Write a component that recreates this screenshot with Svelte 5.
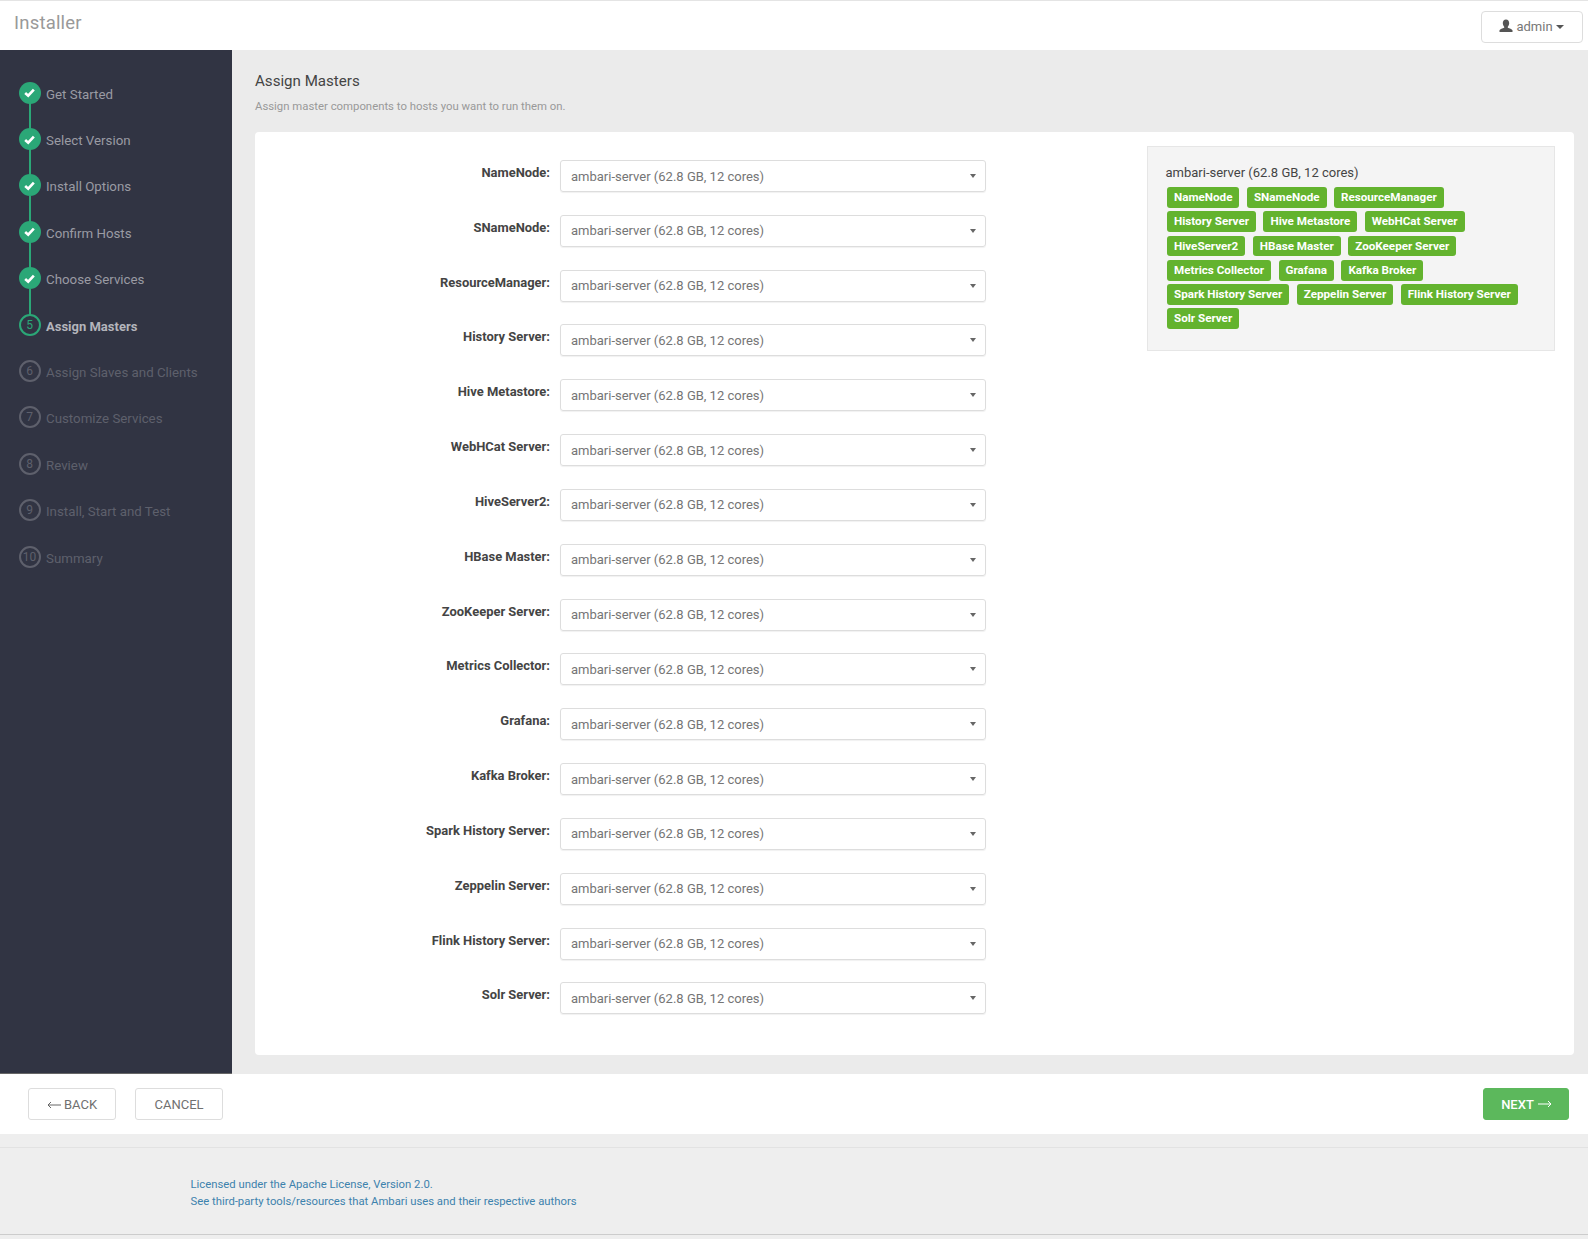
<script>
  const done = ['Get Started', 'Select Version', 'Install Options', 'Confirm Hosts', 'Choose Services'];
  const todo = ['Assign Slaves and Clients', 'Customize Services', 'Review', 'Install, Start and Test', 'Summary'];
  const comps = ['NameNode', 'SNameNode', 'ResourceManager', 'History Server', 'Hive Metastore', 'WebHCat Server', 'HiveServer2', 'HBase Master', 'ZooKeeper Server', 'Metrics Collector', 'Grafana', 'Kafka Broker', 'Spark History Server', 'Zeppelin Server', 'Flink History Server', 'Solr Server'];
  const host = 'ambari-server (62.8 GB, 12 cores)';
</script>

<div class="page">
  <header class="top">
    <span class="brand">Installer</span>
    <button class="user">
      <svg class="person" viewBox="0 0 14 14" width="14" height="14"><path d="M7 0.5c2 0 3.2 1.5 3.2 3.6 0 1.5-.6 2.8-1.4 3.6v1.1c1.6.6 4.2 1.2 4.7 2.5v1.7H.5v-1.700c.5-1.300 3.100-1.900 4.700-2.500V7.700C4.400 6.900 3.800 5.600 3.800 4.100 3.800 2 5 .5 7 .5z" fill="#555"/></svg>
      <span>admin</span><i class="caret dark"></i>
    </button>
  </header>

  <div class="main">
    <nav class="side">
      {#each done as s, i}
        <div class="step">
          <span class="dot ok">
            <svg viewBox="0 0 12 12" width="13" height="13"><path d="M2 6.500 4.800 9 10 3.300" fill="none" stroke="#fff" stroke-width="2.400"/></svg>
          </span>
          <span class="name ok-name">{s}</span>
          <span class="line"></span>
        </div>
      {/each}
      <div class="step">
        <span class="dot cur">5</span><span class="name cur-name">Assign Masters</span>
      </div>
      {#each todo as s, i}
        <div class="step">
          <span class="dot off">{i + 6}</span><span class="name off-name">{s}</span>
        </div>
      {/each}
    </nav>

    <section class="content">
      <h2>Assign Masters</h2>
      <p class="sub">Assign master components to hosts you want to run them on.</p>
      <div class="card">
        <div class="form">
          {#each comps as c}
            <div class="row">
              <span class="lab">{c}:</span>
              <div class="sel"><span>{host}</span><i class="caret small"></i></div>
            </div>
          {/each}
        </div>
        <aside class="panel">
          <div class="host">{host}</div>
          <div class="tags">
            {#each comps as c}<span class="tag">{c}</span>{/each}
          </div>
        </aside>
      </div>
    </section>
  </div>

  <div class="actions">
    <div class="left">
      <button class="btn">
        <svg viewBox="0 0 14 8" width="14" height="8"><path d="M14 4H1M4 1 1 4l3 3" fill="none" stroke="#666" stroke-width="1"/></svg>
        BACK
      </button>
      <button class="btn">CANCEL</button>
    </div>
    <button class="btn next">
      NEXT
      <svg viewBox="0 0 14 8" width="14" height="8"><path d="M0 4h13M10 1l3 3-3 3" fill="none" stroke="#fff" stroke-width="1"/></svg>
    </button>
  </div>

  <footer class="foot">
    <div>Licensed under the Apache License, Version 2.0.</div>
    <div>See third-party tools/resources that Ambari uses and their respective authors</div>
  </footer>
</div>

<style>
  :global(body) { margin: 0; font-family: Roboto, "Liberation Sans", sans-serif; background: #fff; }
  .page { width: 1588px; height: 1239px; display: flex; flex-direction: column; overflow: hidden; background: #eee; }
  .top { height: 50px; box-sizing: border-box; border-top: 1px solid #e4e4e4; background: #fff; display: flex; align-items: center; justify-content: space-between; padding: 0 5px 0 14px; flex: none; }
  .brand { font-size: 18.500px; color: #999; letter-spacing: 0.2px; margin-top: -5px; }
  .user { width: 102px; height: 32px; margin-top: 2px; box-sizing: border-box; border: 1px solid #ddd; border-radius: 4px; background: #fff; color: #777; font: 13px Roboto, sans-serif; display: flex; align-items: center; justify-content: center; gap: 3px; padding: 0 1px 0 0; }
  .person { margin-top: -2px; }
  .caret { display: inline-block; width: 0; height: 0; border-left: 4px solid transparent; border-right: 4px solid transparent; border-top: 4px solid #666; }
  .caret.small { border-left-width: 3.500px; border-right-width: 3.500px; }
  .caret.dark { border-top-color: #555; margin-left: 0; }

  .main { height: 1024px; flex: none; display: flex; background: #ebebeb; }
  .side { width: 232px; flex: none; background: #313443; border-bottom: 1px solid #666; box-sizing: border-box; padding-top: 20px; }
  .step { position: relative; height: 46.400px; display: flex; align-items: center; padding-left: 18.500px; }
  .dot { width: 22px; height: 22px; box-sizing: border-box; border-radius: 50%; display: flex; align-items: center; justify-content: center; font-size: 12px; flex: none; margin-top: -1px; }
  .ok { background: #2ba777; }
  .cur { border: 2px solid #2ba777; color: #2ba777; }
  .off { border: 2px solid #5e606c; color: #5e606c; }
  .name { font-size: 13.300px; margin-left: 5.500px; margin-top: 2px; white-space: nowrap; }
  .ok-name { color: #9a9ba3; }
  .cur-name { color: #b4b5bb; font-weight: 700; font-size: 13px; }
  .off-name { color: #5e606c; }
  .line { position: absolute; left: 28.500px; top: 33px; width: 2px; height: 26px; background: #2ba777; }

  .content { flex: 1; min-width: 0; padding: 22px 14px 0 23px; }
  h2 { margin: 0; font-size: 15.100px; font-weight: 400; color: #444; line-height: 19px; }
  .sub { margin: 7px 0 0; font-size: 11.350px; color: #999; line-height: 16px; }
  .card { margin-top: 18px; height: 923px; box-sizing: border-box; background: #fff; border-radius: 4px; display: flex; padding: 14px 19px 0 0; }
  .form { width: 740px; padding-top: 14px; flex: none; }
  .row { height: 54.830px; display: flex; align-items: flex-start; }
  .lab { width: 295px; text-align: right; font-size: 12.950px; font-weight: 700; color: #444; line-height: 20px; padding-top: 3px; flex: none; }
  .sel { margin-left: 10px; width: 426px; flex: none; height: 32px; box-sizing: border-box; border: 1px solid #ddd; border-radius: 3px; box-shadow: 0 1px 1px rgba(0,0,0,.06); display: flex; align-items: center; justify-content: space-between; padding: 0 9px 0 10px; font-size: 13px; color: #757575; }
  .panel { margin-left: auto; width: 408px; height: 205px; box-sizing: border-box; background: #f4f4f4; border: 1px solid #e6e6e6; padding: 17px 18px 0 17.500px; }
  .host { font-size: 13px; color: #444; line-height: 17px; }
  .tags { display: flex; flex-wrap: wrap; gap: 3.500px 7.500px; margin-top: 6px; padding-left: 1.500px; }
  .tag { background: #63b32e; color: #fff; font-size: 11.650px; font-weight: 700; line-height: 20.800px; padding: 0 7px; border-radius: 3px; white-space: nowrap; }

  .actions { height: 60px; flex: none; background: #fff; display: flex; align-items: center; justify-content: space-between; padding: 0 19px 0 28px; }
  .left { display: flex; gap: 19px; }
  .btn { width: 88px; height: 32px; box-sizing: border-box; border: 1px solid #ddd; border-radius: 3px; background: #fff; color: #707070; font: 13px Roboto, sans-serif; display: flex; align-items: center; justify-content: center; gap: 3px; padding: 1px 0 0; margin-top: 0; }
  .next { background: #5cb85c; border-color: #5cb85c; color: #fff; font-weight: 500; gap: 4px; width: 86px; padding: 0 0 0 1px; }
  .foot { flex: 1; margin-top: 13px; margin-bottom: 4px; background: #eee; border-top: 1px solid #e2e2e2; border-bottom: 1px solid #ccc; padding: 28px 0 0 190.500px; font-size: 11.300px; line-height: 17px; color: #3d82ad; }
</style>
